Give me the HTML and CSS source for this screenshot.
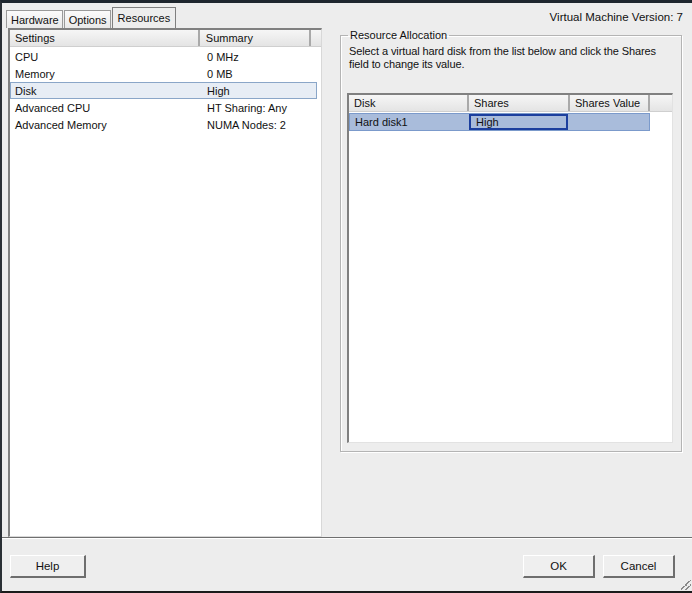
FILE: index.html
```html
<!DOCTYPE html>
<html lang="en">
<head>
  <meta charset="UTF-8">
  <title>Virtual Machine Properties</title>
  <link rel="stylesheet" href="styles.css">
</head>
<body>
  <div class="window">
    <div class="tabbar">
      <div class="tabs">
        <div class="tab">Hardware</div>
        <div class="tab">Options</div>
        <div class="tab active">Resources</div>
      </div>
      <div class="version">Virtual Machine Version: 7</div>
    </div>

    <div class="content">
      <div class="list settings-list">
        <div class="list-head">
          <div class="col col-setting">Settings</div>
          <div class="col col-summary">Summary</div>
          <div class="col col-fill"></div>
        </div>
        <div class="list-body">
          <div class="row"><span class="cell-setting">CPU</span><span>0 MHz</span></div>
          <div class="row"><span class="cell-setting">Memory</span><span>0 MB</span></div>
          <div class="row selected"><span class="cell-setting">Disk</span><span>High</span></div>
          <div class="row"><span class="cell-setting">Advanced CPU</span><span>HT Sharing: Any</span></div>
          <div class="row"><span class="cell-setting">Advanced Memory</span><span>NUMA Nodes: 2</span></div>
        </div>
      </div>

      <div class="pane">
        <fieldset class="group">
          <legend>Resource Allocation</legend>
          <p class="hint">Select a virtual hard disk from the list below and click the Shares field to change its value.</p>
          <div class="disk-table">
            <div class="table-head">
              <div class="th th-disk">Disk</div>
              <div class="th th-shares">Shares</div>
              <div class="th th-value">Shares Value</div>
              <div class="th th-fill"></div>
            </div>
            <div class="table-row">
              <div class="td td-disk">Hard disk1</div>
              <div class="td td-shares editing">High</div>
              <div class="td td-value"></div>
            </div>
          </div>
        </fieldset>
      </div>
    </div>

    <div class="footer">
      <button class="btn">Help</button>
      <div class="footer-right">
        <button class="btn btn-ok">OK</button>
        <button class="btn">Cancel</button>
      </div>
      <div class="grip"></div>
    </div>
  </div>
</body>
</html>
```

FILE: styles.css
```css
:root {
  --dialog-bg: #ededed;
  --frame: #1e262e;
  --text: #111;
  --shadow: #808080;
  --light: #ffffff;
}

* {
  box-sizing: border-box;
}

body {
  margin: 0;
  background-color: var(--dialog-bg);
  color: var(--text);
  font-family: "Liberation Sans", Arial, sans-serif;
  font-size: 11px;
}

.window {
  width: 692px;
  height: 593px;
  display: flex;
  flex-direction: column;
  border-top: 3px solid var(--frame);
  border-left: 2px solid #2a2f35;
  border-bottom: 2px solid #1b1b1b;
  background-color: var(--dialog-bg);
}

/* tabs */
.tabbar {
  height: 25px;
  display: flex;
  align-items: flex-end;
  justify-content: space-between;
  padding-left: 4px;
}

.tabs {
  display: flex;
  align-items: flex-end;
}

.tab {
  height: 18px;
  padding: 3px 3px 0 4px;
  margin-right: 1px;
  border: 1px solid #9a9a9a;
  border-bottom: none;
  background: linear-gradient(#fbfbfb, #e9e9e9);
}

.tab.active {
  height: 22px;
  margin-bottom: -1px;
  padding-top: 4px;
  padding-left: 5px;
  padding-right: 5px;
  background: var(--dialog-bg);
  border-color: #7f7f7f;
}

.version {
  align-self: center;
  margin-top: 3px;
  padding-right: 9px;
  font-size: 11.5px;
}

/* main area */
.content {
  flex: 1;
  display: flex;
}

.list {
  background-color: #fff;
  border-top: 2px solid var(--shadow);
  border-left: 2px solid var(--shadow);
  border-right: 1px solid #d8d8d8;
  border-bottom: 1px solid #d8d8d8;
}

.settings-list {
  width: 314px;
  margin-left: 6px;
  display: flex;
  flex-direction: column;
}

.list-head,
.table-head {
  display: flex;
  height: 17px;
  background: linear-gradient(#f6f6f6, #e4e4e4);
  border-bottom: 1px solid #cfcfcf;
}

.col,
.th {
  padding: 2px 5px 0;
  border-right: 2px solid #a9a9a9;
  white-space: nowrap;
}

.col-setting {
  width: 195px;
}

.col-summary {
  width: 114px;
  padding-left: 6px;
}

.col-fill {
  flex: 1;
  border-right: none;
}

.list-body {
  padding: 1px 4px 0 0;
}

.row {
  display: flex;
  height: 17px;
  align-items: center;
  padding-left: 4px;
  border: 1px solid transparent;
}

.row.selected {
  background-color: #e7edf5;
  border-color: #8aa6c8;
}

.cell-setting {
  width: 192px;
}

/* right pane */
.pane {
  flex: 1;
  padding: 1px 10px 0 18px;
}

.group {
  margin: 0;
  height: 423px;
  padding: 0 8px 8px 6px;
  border: 1px solid #b4b4b4;
  box-shadow: inset 1px 1px 0 #fff, 1px 1px 0 #fff;
}

.group legend {
  padding: 0 2px;
  margin-left: 1px;
}

.hint {
  margin: 4px 0 0 2px;
  line-height: 13px;
  letter-spacing: -0.1px;
}

.disk-table {
  height: 350px;
  margin-top: 22px;
  background-color: #fff;
  border-top: 2px solid var(--shadow);
  border-left: 2px solid var(--shadow);
  border-right: 1px solid #e2e2e2;
  border-bottom: 1px solid #e2e2e2;
}

.th-disk {
  width: 120px;
}

.th-shares {
  width: 101px;
}

.th-value {
  width: 80px;
}

.th-fill {
  flex: 1;
  border-right: none;
}

.table-row {
  display: flex;
  height: 18px;
  margin-top: 1px;
  width: 301px;
  background-color: #a9bcdb;
  border: 1px solid #7b9acb;
}

.td {
  padding: 2px 5px 0;
  white-space: nowrap;
}

.td-disk {
  width: 119px;
}

.td-shares {
  width: 99px;
}

.td.editing {
  border: 2px solid #1c3f9e;
  padding-top: 0;
}

/* footer */
.footer {
  position: relative;
  height: 54px;
  display: flex;
  justify-content: space-between;
  align-items: flex-start;
  padding: 17px 17px 0 8px;
  border-top: 1px solid #6f6f6f;
  box-shadow: inset 0 1px 0 #fff;
}

.footer-right {
  display: flex;
  gap: 8px;
}

.btn {
  width: 76px;
  height: 23px;
  padding: 0;
  font-family: inherit;
  font-size: 11.5px;
  color: var(--text);
  background-color: #efefef;
  border: 1px solid #fff;
  border-right: 2px solid #6e6e6e;
  border-bottom: 2px solid #6e6e6e;
}

.footer-right .btn {
  width: 72px;
}

.grip {
  position: absolute;
  right: 1px;
  bottom: 1px;
  width: 10px;
  height: 10px;
  background: linear-gradient(135deg, transparent 45%, #8a8a8a 45%, #8a8a8a 55%, transparent 55%, transparent 70%, #8a8a8a 70%, #8a8a8a 80%, transparent 80%);
}
```
